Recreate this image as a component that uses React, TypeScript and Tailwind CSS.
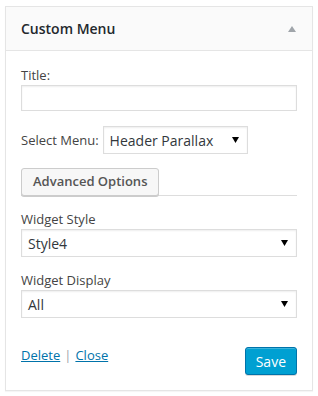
import React from "react";

function Caret() {
  return (
    <svg width="7" height="6" viewBox="0 0 7 6" className="shrink-0">
      <polygon points="0,0 7,0 3.5,6" fill="#000" />
    </svg>
  );
}

function FakeSelect({ value, className }: { value: string; className: string }) {
  return (
    <div
      className={`flex items-center justify-between border border-[#ddd] bg-white pl-[6px] pr-[8px] text-[14px] text-[#32373c] shadow-[inset_0_1px_2px_rgba(0,0,0,0.07)] ${className}`}
    >
      <span>{value}</span>
      <Caret />
    </div>
  );
}

export default function App() {
  return (
    <div className="min-h-[396px] bg-white pl-[5px] pt-[6px] font-['Open_Sans',sans-serif] text-[13px] text-[#444]">
      <div className="w-[308px] border border-[#e5e5e5] bg-white shadow-[0_1px_1px_rgba(0,0,0,0.04)]">
        <div className="flex h-[44px] items-center justify-between border-b border-[#e5e5e5] bg-[#fafafa] pl-[15px] pr-[16px]">
          <h3 className="text-[14px] font-semibold text-[#23282d]">Custom Menu</h3>
          <svg width="8" height="6" viewBox="0 0 8 6">
            <polygon points="4,0 8,6 0,6" fill="#a0a5aa" />
          </svg>
        </div>

        <div className="px-[15px] pt-[14px] pb-[15px]">
          <label className="block leading-[20px]">Title:</label>
          <div className="h-[26px] w-full border border-[#ddd] bg-white shadow-[inset_0_1px_2px_rgba(0,0,0,0.07)]" />

          <div className="mt-[15px] flex items-center gap-[4px]">
            <span className="leading-[20px]">Select Menu:</span>
            <FakeSelect value="Header Parallax" className="h-[28px] w-[145px]" />
          </div>

          <div className="mt-[14px] flex border-b border-[#ddd]">
            <button className="-mb-px h-[28px] rounded-[3px] border border-[#ccc] bg-[#f7f7f7] px-[11px] text-[13px] font-semibold text-[#555] shadow-[0_1px_0_#ccc]">
              Advanced Options
            </button>
          </div>

          <label className="mt-[13px] block leading-[20px]">Widget Style</label>
          <FakeSelect value="Style4" className="h-[28px] w-full" />

          <label className="mt-[13px] block leading-[20px]">Widget Display</label>
          <FakeSelect value="All" className="h-[28px] w-full" />

          <div className="mt-[29px] flex items-start justify-between">
            <div className="leading-[16px]">
              <a className="text-[#0073aa] underline">Delete</a>
              <span className="mx-[4px] text-[#a0a5aa]">|</span>
              <a className="text-[#0073aa] underline">Close</a>
            </div>
            <button className="h-[28px] rounded-[3px] border border-[#0073aa] bg-[#00a0d2] px-[10px] text-[14px] text-white shadow-[inset_0_1px_0_rgba(120,200,230,0.5),0_1px_0_rgba(0,0,0,0.15)]">
              Save
            </button>
          </div>
        </div>
      </div>
    </div>
  );
}
